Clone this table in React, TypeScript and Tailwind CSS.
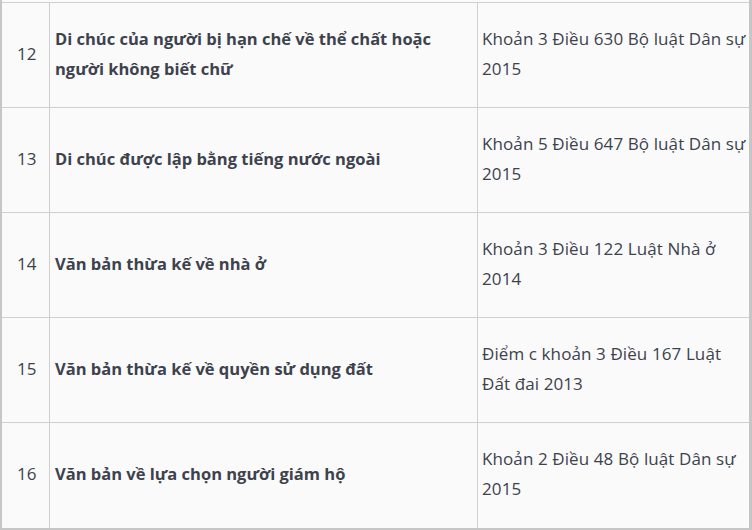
import React from "react";

const rows = [
  { n: "12", a: ["Di chúc của người bị hạn chế về thể chất hoặc", "người không biết chữ"], b: ["Khoản 3 Điều 630 Bộ luật Dân sự", "2015"] },
  { n: "13", a: ["Di chúc được lập bằng tiếng nước ngoài"], b: ["Khoản 5 Điều 647 Bộ luật Dân sự", "2015"] },
  { n: "14", a: ["Văn bản thừa kế về nhà ở"], b: ["Khoản 3 Điều 122 Luật Nhà ở", "2014"] },
  { n: "15", a: ["Văn bản thừa kế về quyền sử dụng đất"], b: ["Điểm c khoản 3 Điều 167 Luật", "Đất đai 2013"] },
  { n: "16", a: ["Văn bản về lựa chọn người giám hộ"], b: ["Khoản 2 Điều 48 Bộ luật Dân sự", "2015"] },
];

export default function App() {
  return (
    <div
      className="w-[752px] h-[530px] bg-[#fafafa] text-[#3d424d] overflow-hidden"
      style={{ fontFamily: "'Open Sans', 'Noto Sans', sans-serif" }}
    >
      <div className="w-[752px] border-l-2 border-r-[3px] border-b-[3px] border-[#c6c6c6] pt-[2px]">
        <div className="border-t border-[#cfcfcf]">
          {rows.map((r) => (
            <div key={r.n} className="flex h-[105px] border-b border-[#cfcfcf] last:border-b-0">
              <div className="w-[48px] shrink-0 flex items-center pl-[15px] pb-[3px] text-[17px] border-r border-[#cfcfcf]">
                {r.n}
              </div>
              <div className="w-[428px] shrink-0 flex flex-col justify-center pl-[5px] pb-[3px] text-[16.5px] leading-[30px] font-bold border-r border-[#cfcfcf]">
                {r.a.map((l) => (
                  <div key={l} className="whitespace-nowrap">{l}</div>
                ))}
              </div>
              <div className="flex-1 flex flex-col justify-center pl-[4px] pb-[3px] text-[17px] leading-[30px] tracking-[0.1px]">
                {r.b.map((l) => (
                  <div key={l} className="whitespace-nowrap">{l}</div>
                ))}
              </div>
            </div>
          ))}
        </div>
      </div>
    </div>
  );
}
